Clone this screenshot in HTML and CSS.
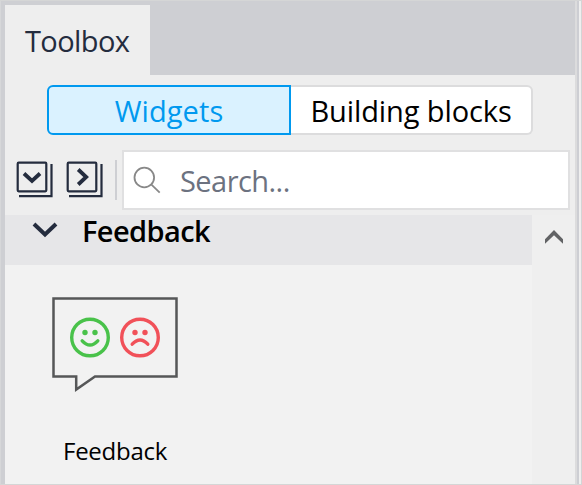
FILE: index.html
```html
<!DOCTYPE html>
<html lang="en">
<head>
<meta charset="utf-8">
<title>Toolbox</title>
<link rel="stylesheet" href="styles.css">
</head>
<body>
<div class="window">
  <main class="panel">
    <header class="tabs"><div class="tab"><span class="tab-label">Toolbox</span></div></header>
    <div class="switch">
      <button class="option selected"><span class="widgets-label">Widgets</span></button>
      <button class="option"><span class="blocks-label">Building blocks</span></button>
    </div>
    <div class="tools">
      <svg class="tool" width="38" height="38" viewBox="0 0 38 38"><rect x="2.700" y="2.700" width="28.600" height="28.600" rx="1"/><path d="M36.500 4V36.200H4"/><path class="bold" d="M9 13.500l8 7.500 8-7.500"/></svg>
      <svg class="tool second" width="38" height="38" viewBox="0 0 38 38"><rect x="2.700" y="2.700" width="28.600" height="28.600" rx="1"/><path d="M36.500 4V36.200H4"/><path class="bold" d="M13.200 9.500l8 7.500-8 7.500"/></svg>
      <span class="divider"></span>
      <div class="search">
        <svg class="glass" width="28" height="28" viewBox="0 0 28 28"><circle cx="11.300" cy="11.500" r="9.800"/><path d="M18.200 18.400l8.500 8.300"/></svg>
        <span class="search-label">Search...</span>
      </div>
    </div>
    <div class="content">
      <section class="list">
        <div class="group">
          <svg class="arrow" width="26" height="16" viewBox="0 0 26 16"><path d="M2 2l11 10.500L24 2"/></svg>
          <span class="group-label">Feedback</span>
        </div>
        <div class="item">
          <svg class="preview" width="126" height="96" viewBox="0 0 126 96">
            <path class="bubble" d="M1.500 1.500H124.500V79.500H43L24.200 92.500V79.500H1.500Z"/>
            <g class="happy"><circle cx="38" cy="40.500" r="18.300"/><path d="M30.200 43.800q7.800 8.500 15.600 0"/><circle class="dot" cx="33" cy="35.500" r="2.700"/><circle class="dot" cx="43" cy="35.500" r="2.700"/></g>
            <g class="sad"><circle cx="88" cy="40.500" r="18.300"/><path d="M80.200 47.200q7.800-8.500 15.600 0"/><circle class="dot" cx="83" cy="35.500" r="2.700"/><circle class="dot" cx="93" cy="35.500" r="2.700"/></g>
          </svg>
          <span class="item-label">Feedback</span>
        </div>
      </section>
      <div class="scroll"><svg width="20" height="16" viewBox="0 0 20 16"><path d="M0 9.300 9 0 18 9.300V13.700L9 5.300 0 13.700Z"/></svg></div>
    </div>
  </main>
</div>
</body>
</html>
```
FILE: styles.css
```css
* { box-sizing: border-box; }
body { margin: 0; font-family: "Open Sans", "Noto Sans", sans-serif; }
svg { display: block; flex: none; fill: none; }
span { white-space: nowrap; }
.window {
  width: 582px; height: 485px; overflow: hidden;
  background: linear-gradient(90deg, #d6d7d9 1px, #cecfd3 1px 5px, #eee 5px 575px, #dcdcdd 575px 577px, #cdced3 577px 579px, #efefef 579px 581px, #d4d4d5 581px);
  border-top: 1px solid #d5d6d6; border-bottom: 1px solid #d5d6d6;
  padding-left: 5px;
}
.panel { width: 570px; }
.tabs { height: 74px; background: #cecfd3; display: flex; padding-top: 4px; }
.tab { width: 145px; background: #eee; padding: 16px 0 0 20px; color: #242c3e; font-size: 29px; line-height: 40px; letter-spacing: -.6px; }
.switch { display: flex; width: 486px; height: 50px; margin: 10px 0 0 42px; }
.option { font: 29px/40px "Open Sans", "Noto Sans", sans-serif; padding: 2px 0 0; height: 50px; width: 242px; border: 2px solid #dcdcdd; border-left: 0; border-radius: 0 6px 6px 0; background: #fff; color: #000; letter-spacing: -.1px; }
.selected { width: 244px; border: 2px solid #0099ef; border-radius: 6px 0 0 6px; background: #daf2ff; color: #0099ef; letter-spacing: .1px; }
.tools { display: flex; height: 60px; margin-top: 15px; padding-left: 10px; }
.tool { margin-top: 10px; stroke: #242c3e; stroke-width: 2.2; }
.second { margin-left: 12px; }
.bold { stroke-width: 3.8; }
.divider { width: 2px; height: 40px; margin: 10px 0 0 12px; background: #cecfd3; }
.search { width: 448px; height: 60px; margin-left: 5px; border: 2px solid #e0e0e1; background: #fff; display: flex; }
.glass { margin: 14px 0 0 9px; stroke: #888; stroke-width: 1.8; }
.search-label { margin: 9px 0 0 19px; color: #6c7280; font-size: 29px; line-height: 40px; letter-spacing: -.55px; }
.content { display: flex; height: 269px; margin-top: 5px; }
.list { width: 527px; background: #f2f2f2; }
.group { display: flex; height: 50px; background: #e6e6e8; }
.arrow { margin: 7px 0 0 27px; stroke: #242c3e; stroke-width: 4; }
.group-label { margin: -4px 0 0 24px; font-size: 29px; line-height: 40px; font-weight: 600; letter-spacing: -.6px; }
.item { width: 220px; display: flex; flex-direction: column; }
.preview { margin: 32px 0 0 47px; stroke-width: 3.4; stroke-linecap: round; }
.bubble { stroke: #565758; stroke-width: 2.5; }
.happy { stroke: #49c24a; }
.sad { stroke: #f15159; }
.dot { stroke: none; }
.happy .dot { fill: #49c24a; }
.sad .dot { fill: #f15159; }
.item-label { margin: 38px 0 0 58px; font-size: 24px; line-height: 40px; letter-spacing: -.25px; }
.scroll { width: 43px; padding: 15px 0 0 13px; background: #efefef; }
.scroll path { fill: #626365; }
.tab-label, .widgets-label, .blocks-label, .search-label, .group-label, .item-label { display: block; }
```
